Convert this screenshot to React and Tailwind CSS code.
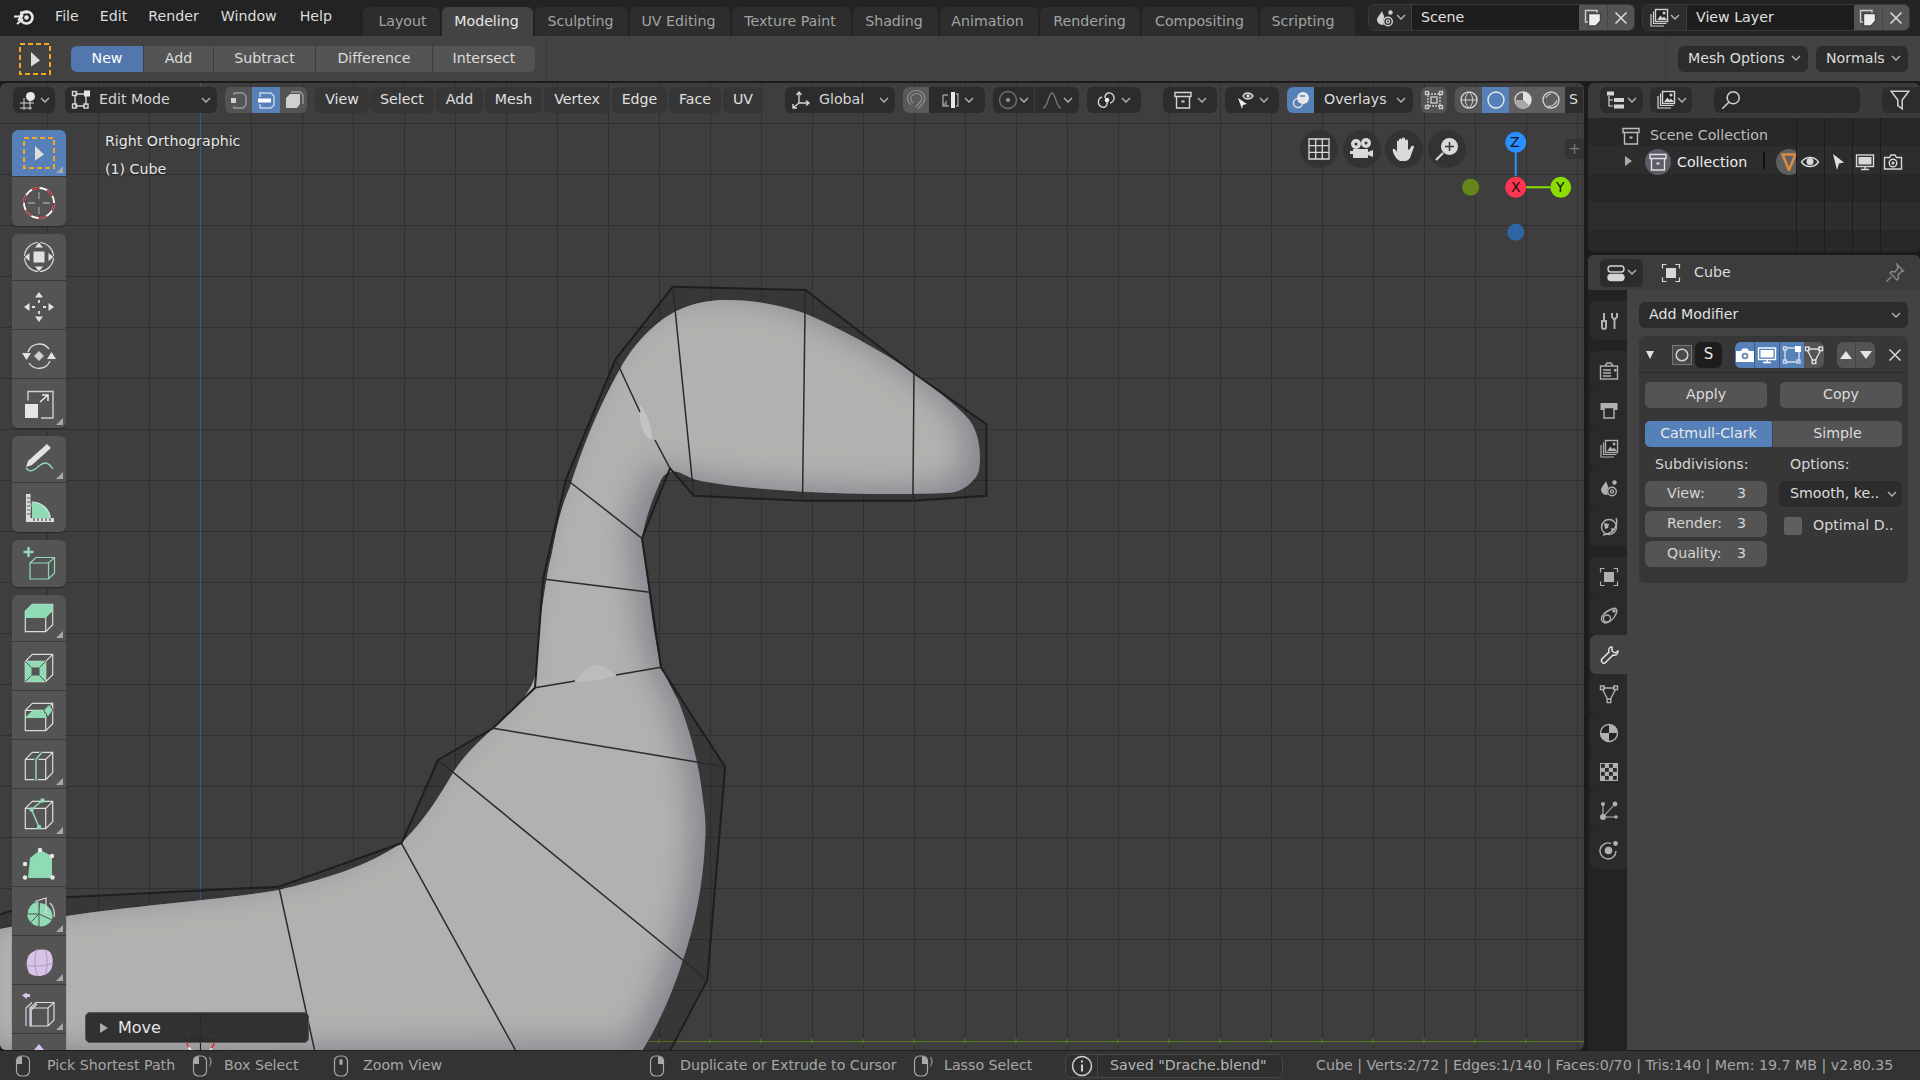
import React from 'react';

const G = ({ s = 20, className = '', children }) => (
  <svg width={s} height={s} viewBox="0 0 20 20" fill="none" stroke="currentColor" strokeWidth="1.4" className={`shrink-0 ${className}`}>
    {children}
  </svg>
);

const Chevron = ({ className = '' }) => (
  <svg width="10" height="7" viewBox="0 0 10 7" fill="none" stroke="#b5b5b5" strokeWidth="1.4" className={`shrink-0 ${className}`}>
    <path d="M1 1l4 4 4-4" />
  </svg>
);

// shared icons
const SceneIcon = () => (
  <G>
    <path d="M7 3 C5 7 2 9 2 12 a5 5 0 0 0 7 4.5 C7 13 9 10 9.500 9.500Z" fill="currentColor" stroke="none" />
    <circle cx="15.500" cy="4.500" r="2.200" fill="currentColor" stroke="none" />
    <circle cx="13" cy="13.500" r="4.300" />
    <circle cx="13" cy="13.500" r="1.600" />
  </G>
);
const LayersIcon = () => (
  <G>
    <path d="M2 6v12h13M4.500 3.500v12h13" strokeWidth="1.200" />
    <rect x="6.500" y="1.500" width="12" height="12" fill="#232323" />
    <path d="M8 12l3.500-4.500 2 2.500 1.500-1.500 3 3.500z" fill="currentColor" stroke="none" />
    <circle cx="15" cy="5" r="1.500" fill="currentColor" stroke="none" />
  </G>
);
const CopyIcon = () => (
  <G>
    <path d="M5 14H2.500V2.500H14V5" />
    <path d="M5.500 5.500H17.500V13L13 18H5.500Z" fill="#eee" stroke="#444" />
  </G>
);
const XIcon = ({ s = 14 }) => (
  <svg width={s} height={s} viewBox="0 0 14 14" stroke="currentColor" strokeWidth="1.500" className="shrink-0"><path d="M1.500 1.500l11 11M12.500 1.500l-11 11" /></svg>
);
const ArchiveIcon = () => (
  <G>
    <path d="M2 2.500h16v4H2zM3.500 6.500V18h13V6.500" />
    <path d="M8.500 11.500h3" strokeWidth="2" />
  </G>
);
const ObjectIcon = () => (
  <G>
    <path d="M1.500 5.500v-4h4M14.500 1.500h4v4M18.500 14.500v4h-4M5.500 18.500h-4v-4" strokeWidth="1.200" />
    <rect x="5" y="5" width="10" height="10" fill="currentColor" stroke="none" />
  </G>
);
const OutlinerIcon = () => (
  <G>
    <path d="M3 6v10h4M3 10h4" strokeWidth="1.200" />
    <path d="M1 1.500h7v4H1zM8 8h10v4H8zM8 14.500h10v4H8z" fill="currentColor" stroke="none" />
  </G>
);
const CameraIcon = () => (
  <G>
    <path d="M1 6h5l1.500-2.500h5L14 6h5v11H1z" fill="currentColor" stroke="none" />
    <circle cx="10" cy="11" r="4" fill="#6c86ab" stroke="#fff" />
    <circle cx="10" cy="11" r="1.500" fill="#fff" stroke="none" />
  </G>
);
const MonitorIcon = () => (
  <G>
    <rect x="1.500" y="3" width="17" height="11.500" />
    <rect x="3.500" y="5" width="13" height="7.500" fill="currentColor" stroke="none" />
    <path d="M6 17.500h8M10 14.500v3" />
  </G>
);
const DataIcon = () => (
  <G strokeWidth="1.200">
    <path d="M4 4h12M3.500 5.500L9 16M16.500 5.500L11 16" />
    <rect x="1.500" y="2" width="3.600" height="3.600" />
    <rect x="14.900" y="2" width="3.600" height="3.600" />
    <rect x="8.200" y="15" width="3.600" height="3.600" />
  </G>
);
const ArrowIcon = () => (
  <G><path d="M5 2l11 8.500-5 1L9 18z" fill="currentColor" stroke="none" /></G>
);

// toolbar icons, on a 36 box
const Cube = ({ c = '#dcdcdc' }) => (
  <path d="M4.300 11.300L11.300 4.300H31.700V24.700L24.700 31.700H4.300ZM4.300 11.300H24.700L31.700 4.300M24.700 11.300V31.700" stroke={c} strokeWidth="1.200" fill="none" />
);
const green = '#8fdcb4';
const purple = '#d9c2e8';
const ToolIcon = ({ children }) => (
  <svg width="36" height="36" viewBox="0 0 36 36" fill="none" className="shrink-0">{children}</svg>
);
const tools = {
  select: (
    <>
      <rect x="3" y="3" width="30" height="30" stroke="#f5a623" strokeWidth="2" strokeDasharray="5 3" />
      <path d="M14 11L23 19.500 14 25.500z" fill="#dedede" />
    </>
  ),
  cursor: (
    <>
      <circle cx="18" cy="18" r="15" stroke="#fff" strokeWidth="1.800" />
      <circle cx="18" cy="18" r="15" stroke="#a53038" strokeWidth="1.800" strokeDasharray="8 7.700" />
      <path d="M18 7v7M18 22v7M7 18h7M22 18h7" stroke="#9a9a9a" strokeWidth="1.300" />
    </>
  ),
  transform: (
    <>
      <circle cx="18" cy="18" r="14.500" stroke="#d8d8d8" strokeWidth="1.200" />
      <rect x="12.500" y="12.500" width="11" height="11" fill="#e2e2e2" />
      <path d="M18 3l-5 6h10zM18 33l-5-6h10zM3 18l6-5v10zM33 18l-6-5v10z" fill="#e2e2e2" stroke="#545454" strokeWidth="1" />
    </>
  ),
  move: (
    <>
      <path d="M18 3l-4 5.500h8zM18 33l-4-5.500h8zM3 18l5.500-4v8zM33 18l-5.500-4v8z" fill="#e2e2e2" />
      <path d="M18 11v3M18 22v3M11 18h3M22 18h3" stroke="#e2e2e2" strokeWidth="1.800" />
    </>
  ),
  rotate: (
    <>
      <path d="M7 14A12 12 0 0 1 28 11M29 23A12 12 0 0 1 8 25" stroke="#dcdcdc" strokeWidth="1.300" />
      <path d="M18 13l5 5-5 5-5-5z" fill="#cfcfcf" />
      <path d="M1 15h9l-4.500 7zM26 21h9l-4.500-7z" fill="#e2e2e2" />
    </>
  ),
  scale: (
    <>
      <rect x="4" y="17" width="13" height="14" fill="#e4e4e4" />
      <path d="M7 13.500V4.500H32V31H20" stroke="#cfcfcf" strokeWidth="1.400" />
      <path d="M19 15l8-7M21 8h6v6" stroke="#eee" strokeWidth="1.500" />
    </>
  ),
  annotate: (
    <>
      <path d="M26 3l4 4L11 24l-6 2 2-6z" fill="#e2e2e2" />
      <path d="M5 27c5 6 9 1 13-2s8-6 14 3" stroke={green} strokeWidth="1.300" />
    </>
  ),
  measure: (
    <>
      <path d="M9 23A17 17 0 0 1 11 11A18 18 0 0 1 30 27H11V11z" fill={green} />
      <path d="M11 11A18 18 0 0 1 29 27" stroke="#dcdcdc" strokeWidth="1.200" />
      <path d="M5 3h4.500v24H33v4H5z" fill="#dcdcdc" />
      <path d="M6 7h3M6 11h3M6 15h3M6 19h3M6 23h3M13 27v3M17 27v3M21 27v3M25 27v3M29 27v3" stroke="#545454" strokeWidth="1.200" />
    </>
  ),
  addCube: (
    <>
      <path d="M7.500 1v10M2.500 6h10" stroke={green} strokeWidth="2.400" />
      <path d="M9 17l6-5.500H33.500V27L27.500 33H9ZM9 17H27.500L33.500 11.500M27.500 17V33" stroke={green} strokeWidth="1.200" />
    </>
  ),
  extrude: (
    <>
      <Cube />
      <path d="M4.300 11.300L11.300 4.300H31.700V11L24.700 18H4.300Z" fill={green} />
    </>
  ),
  inset: (
    <>
      <Cube />
      <path d="M4.300 11.300H24.700V31.700H4.300ZM10.500 17.500V25.500H18.500V17.500Z" fill={green} fillRule="evenodd" />
      <path d="M4.300 11.300L10.500 17.500M24.700 11.300L18.500 17.500M4.300 31.700L10.500 25.500M24.700 31.700L18.500 25.500" stroke="#545454" />
    </>
  ),
  bevel: (
    <>
      <Cube />
      <path d="M4.300 18.500L11.300 11.500H22.700L25.700 19H4.300Z" fill={green} />
      <path d="M22.700 11L28 5.500L32 11L27 18z" fill={green} stroke="#545454" />
    </>
  ),
  loop: (
    <>
      <Cube />
      <path d="M15 11.300V31.700M15 11.300L21 4.300" stroke="#545454" strokeWidth="4" />
      <path d="M15 11.300V31.700M15 11.300L21 4.300" stroke={green} strokeWidth="1.500" />
    </>
  ),
  knife: (
    <>
      <Cube />
      <path d="M21.500 3.500L10.500 12.500L18 30" stroke={green} strokeWidth="1.500" />
      <circle cx="21.500" cy="3.500" r="2.200" fill={green} />
      <circle cx="10.500" cy="12.500" r="2.200" fill={green} />
      <circle cx="18" cy="30" r="2.200" fill={green} />
    </>
  ),
  poly: (
    <>
      <path d="M7 32L9 12 19 4 31 10V32z" fill={green} />
      <g fill="#e8e8e8">
        <circle cx="19" cy="4" r="2.200" /><circle cx="31" cy="10" r="2.200" /><circle cx="4" cy="18" r="2.200" /><circle cx="4" cy="31.500" r="2.200" /><circle cx="31.500" cy="31.500" r="2.200" />
      </g>
    </>
  ),
  spin: (
    <>
      <path d="M18 19L6 19A13.500 13.500 0 0 0 31 25A13.500 13.500 0 0 0 19 8z" fill={green} />
      <path d="M18 19L6 19A13.500 13.500 0 0 1 18 6zM18 19L31 25M18 19V32M18 19L9 28" stroke="#545454" fill={green} />
      <path d="M14 6.500L25 3V19M29 8c4 4 5 10 4 14" stroke="#dcdcdc" strokeWidth="1.200" />
    </>
  ),
  smooth: (
    <>
      <path d="M8 11C13 5 24 4 29 8C33 13 33 25 27 29C20 34 12 32 8 29C5 22 5 16 8 11z" fill={purple} />
      <path d="M5 21C14 23 24 22 32 19M16 5C13 14 13 24 17 32M24 5C27 14 27 24 24 31" stroke="#a99db5" strokeWidth="1" />
    </>
  ),
  slide: (
    <>
      <path d="M9 15L15 9.500H33V27L27 33H9ZM9 15H27L33 9.500M27 15V33" stroke="#dcdcdc" strokeWidth="1.200" />
      <path d="M5 33V15L12 9" stroke="#545454" strokeWidth="3" />
      <path d="M5 33V15L11 9.500M10 33V17L16 11" stroke="#dcdcdc" strokeWidth="1.100" />
      <path d="M10 33V17L16 11" stroke={purple} strokeWidth="1.300" />
      <path d="M1 2.500L6 -1V1H9V4H6V6z" fill={purple} />
    </>
  ),
  shrink: <path d="M18 2l-5 6h10z" fill={purple} />,
};

const Tool = ({ icon, tri, active }) => (
  <div className={`relative flex h-[49px] first:h-[47px] w-full items-center justify-center border-b border-[#393939] pt-[3px] first:pt-0 last:border-b-0 ${active ? 'bg-[#5680b8]' : 'bg-[#545454]'}`}>
    <ToolIcon>{tools[icon]}</ToolIcon>
    {tri && <div className="absolute right-[3px] bottom-[3px] h-0 w-0 border-b-[7px] border-l-[7px] border-b-[#a8a8a8] border-l-transparent" />}
  </div>
);

const ToolGroup = ({ items, className = '' }) => (
  <div className={`overflow-hidden rounded-[6px] shadow-[0_1px_1px_#2a2a2a] ${className}`}>
    {items.map((t) => <Tool key={t.icon} {...t} />)}
  </div>
);

const workspaces = [
  ['Layout', 'w-[77px] pl-[2px]'],
  ['Modeling', 'w-[91px] pr-[2px]'],
  ['Sculpting', 'w-[93px] pr-[2px]'],
  ['UV Editing', 'w-[100px] pr-[3px]'],
  ['Texture Paint', 'w-[119px] pr-[3px]'],
  ['Shading', 'w-[85px] pr-[3px]'],
  ['Animation', 'w-[98px] pr-[3px]'],
  ['Rendering', 'w-[100px] pr-[1px]'],
  ['Compositing', 'w-[116px] pr-[1px]'],
  ['Scripting', 'w-[95px] pr-[9px]'],
];

const SelectorGroup = ({ icon, label, mlClass, iconW, fieldW }) => (
  <div className={`flex h-[27px] overflow-hidden rounded-[6px] border border-[#3a3a3a] ${mlClass}`}>
    <div className={`flex items-center justify-center gap-[1px] bg-[#2c2c2c] text-[#d0d0d0] ${iconW}`}>{icon}<Chevron /></div>
    <div className={`flex items-center border-l border-[#3f3f3f] bg-[#1d1d1d] pl-[9px] text-[#e0e0e0] ${fieldW}`}>{label}</div>
    <div className="flex w-[28px] items-center justify-center bg-[#545454] text-[#ccc]"><CopyIcon /></div>
    <div className="flex w-[27px] items-center justify-center border-l border-[#444] bg-[#545454] text-[#ddd]"><XIcon /></div>
  </div>
);

const TopBar = () => (
  <div className="flex h-[36px] shrink-0 bg-[#232323]">
    <div className="flex w-[363px] shrink-0 items-center gap-[21px] pb-[2px] text-[#dcdcdc]">
      <div className="ml-[13px] -mr-[1px] w-[22px]">
        <svg width="22" height="18" viewBox="0 0 22 18">
          <circle cx="13.500" cy="9.500" r="6" fill="none" stroke="#e8e8e8" strokeWidth="2.600" />
          <circle cx="13.500" cy="9.500" r="2.300" fill="#e8e8e8" />
          <path d="M1 8.500h9M5 12.500L10 7M7 4.500h8M4 16L10 11" stroke="#e8e8e8" strokeWidth="2" />
        </svg>
      </div>
      <span>File</span><span>Edit</span><span>Render</span><span className="ml-[1px]">Window</span><span className="ml-[2px]">Help</span>
    </div>
    <div className="flex items-end gap-[2px] self-stretch">
      {workspaces.map(([name, w]) => (
        <div key={name} className={`flex h-[29px] items-center justify-center rounded-t-[6px] ${w} ${name === 'Modeling' ? 'bg-[#434343] text-[#e6e6e6]' : 'bg-[#2d2d2d] text-[#a3a3a3]'}`}>{name}</div>
      ))}
    </div>
    <div className="flex items-center pb-[1px]">
      <SelectorGroup icon={<SceneIcon />} label="Scene" mlClass="ml-[13px]" iconW="w-[42px]" fieldW="w-[168px]" />
      <SelectorGroup icon={<LayersIcon />} label="View Layer" mlClass="ml-[7px]" iconW="w-[43px]" fieldW="w-[168px]" />
    </div>
  </div>
);

const booleans = [
  ['New', 'w-[72px]'],
  ['Add', 'w-[70px]'],
  ['Subtract', 'w-[102px]'],
  ['Difference', 'w-[117px]'],
  ['Intersect', 'w-[103px]'],
];

const ToolSettings = () => (
  <div className="flex h-[45px] shrink-0 items-center bg-[#434343]">
    <div className="ml-[17px]"><ToolIcon>{tools.select}</ToolIcon></div>
    <div className="ml-[18px] flex h-[26px] overflow-hidden rounded-[6px]">
      {booleans.map(([name, w], i) => (
        <div key={name} className={`flex items-center justify-center ${w} ${i === 0 ? 'bg-[#5177ae] text-white' : 'border-l border-[#3e3e3e] bg-[#545454] text-[#dcdcdc]'}`}>{name}</div>
      ))}
    </div>
    <div className="ml-[11px] h-full w-[1px] bg-[#3b3b3b]" />
    <div className="ml-[1118px] h-full w-[1px] bg-[#3b3b3b]" />
    <div className="ml-[12px] flex h-[26px] w-[130px] items-center justify-between rounded-[6px] bg-[#2c2c2c] px-[10px] text-[#dcdcdc]">Mesh Options<Chevron className="-mr-[3px]" /></div>
    <div className="ml-[8px] flex h-[26px] w-[92px] items-center justify-between rounded-[6px] bg-[#2c2c2c] px-[10px] text-[#dcdcdc]">Normals<Chevron className="-mr-[3px]" /></div>
  </div>
);

const Box = ({ className = '', children }) => (
  <div className={`flex h-[26px] shrink-0 items-center rounded-[6px] bg-[#2c2c2c] text-[#d5d5d5] ${className}`}>{children}</div>
);
const Menu = ({ label, className }) => (
  <div className={`flex h-[26px] shrink-0 items-center justify-center rounded-[6px] bg-[#363636] text-[#e0e0e0] ${className}`}>{label}</div>
);

const SelectMode = () => (
  <div className="ml-[8px] flex h-[26px] w-[82px] overflow-hidden rounded-[6px] bg-[#545454]">
    <div className="flex w-[27px] items-center justify-center text-[#9a9a9a]">
      <G><path d="M5 5V3h9l3 3v9l-3 3H5v-2" /><rect x="2" y="8" width="5" height="5" fill="#d0d0d0" stroke="none" /></G>
    </div>
    <div className="flex w-[28px] items-center justify-center bg-[#5680b8] text-[#c9d5e6]">
      <G><path d="M4 7V3h11l3 3v9l-3 3H4v-4" /><rect x="2" y="8.500" width="13" height="4" fill="#fff" stroke="none" /></G>
    </div>
    <div className="flex w-[27px] items-center justify-center text-[#9a9a9a]">
      <G><path d="M7 2h9l3 3v9" /><path d="M6 4h10v10l-3 4H2V8z" fill="#d0d0d0" stroke="none" /></G>
    </div>
  </div>
);

const Sphere = ({ kind }) => (
  <G>
    <circle cx="10" cy="10" r="8" />
    {kind === 'wire' && <path d="M2 10h16M10 2c-5 5-5 11 0 16M10 2c5 5 5 11 0 16" strokeWidth="1" />}
    {kind === 'mat' && <path d="M10 2a8 8 0 0 1 6 13.500L10 10z" fill="#e0e0e0" stroke="none" />}
    {kind === 'mat' && <path d="M2 10h8L16 15.500A8 8 0 0 1 2 10z" fill="#a8a8a8" stroke="none" />}
    {kind === 'render' && <path d="M5 8a6 6 0 0 1 5-4M7 16c4 1 8-2 9-6" strokeWidth="1.100" />}
  </G>
);

const ViewHeader = () => (
  <div className="flex h-[30px] shrink-0 items-start pt-[4px] pl-[13px]">
    <Box className="w-[42px] justify-center gap-[1px]">
      <G><path d="M1 13h14M1 18h12M5 8v12M11 8v12" strokeWidth="1" /><circle cx="11.500" cy="6.500" r="4.500" fill="#e8e8e8" stroke="none" /></G>
      <Chevron />
    </Box>
    <Box className="ml-[10px] w-[152px] justify-between px-[6px]">
      <span className="flex items-center gap-[8px]">
        <G strokeWidth="1"><path d="M4 4h10M4 16h10M4 5v10M15 5v10" /><rect x="1.500" y="1.500" width="4" height="4" /><rect x="1.500" y="14" width="4" height="4" /><rect x="13" y="14" width="4" height="4" /><rect x="13" y="0.500" width="6" height="6" fill="#e8e8e8" stroke="none" /></G>
        Edit Mode
      </span>
      <Chevron />
    </Box>
    <SelectMode />
    <Menu label="View" className="ml-[8px] w-[54px]" />
    <Menu label="Select" className="ml-[1px] w-[64px]" />
    <Menu label="Add" className="ml-[2px] w-[47px]" />
    <Menu label="Mesh" className="ml-[2px] w-[57px]" />
    <Menu label="Vertex" className="ml-[2px] w-[66px]" />
    <Menu label="Edge" className="ml-[2px] w-[55px]" />
    <Menu label="Face" className="ml-[2px] w-[52px]" />
    <Menu label="UV" className="ml-[2px] w-[40px]" />
    <Box className="ml-[22px] w-[110px] justify-between px-[6px]">
      <span className="flex items-center gap-[8px]">
        <G strokeWidth="1.200"><path d="M8 2v11L2 18M8 13h10M5.500 5L8 2l2.500 3M15 10.500l3 2.500-3 2.500M2 14v4h4" /></G>
        Global
      </span>
      <Chevron />
    </Box>
    <div className="ml-[8px] flex h-[26px] w-[82px] overflow-hidden rounded-[6px] bg-[#2c2c2c]">
      <div className="flex w-[26px] items-center justify-center bg-[#5a5a5a]">
        <svg width="20" height="22" viewBox="0 0 20 22" fill="none">
          <path d="M6 15L4 12.500C1.500 8 5 3 10.500 3C16 3 19 8.500 16 13L11 18.500" stroke="#8e8e8e" strokeWidth="4.200" />
          <path d="M6 15L4 12.500C1.500 8 5 3 10.500 3C16 3 19 8.500 16 13L11 18.500" stroke="#5a5a5a" strokeWidth="1.800" />
        </svg>
      </div>
      <div className="flex flex-1 items-center justify-center gap-[4px] text-[#999]">
        <G strokeWidth="1.100"><path d="M3 5h5M3 5v11h6M4 13v3M6 11v5M16 4h2v12h-2" /><rect x="11" y="2" width="4" height="16" fill="#e8e8e8" stroke="none" /></G>
        <Chevron />
      </div>
    </div>
    <div className="ml-[8px] flex h-[26px] w-[86px] overflow-hidden rounded-[6px] bg-[#2c2c2c]">
      <div className="flex w-[42px] items-center justify-center gap-[1px] border-r border-[#3e3e3e] text-[#6f6f6f]">
        <G><circle cx="10" cy="10" r="8.500" /><circle cx="10" cy="10" r="2" fill="#9a9a9a" stroke="none" /></G><Chevron />
      </div>
      <div className="flex flex-1 items-center justify-center gap-[1px] text-[#777]">
        <G><path d="M1 18c5 0 5-14 9-15 4 1 4 15 9 15" /></G><Chevron />
      </div>
    </div>
    <Box className="ml-[8px] w-[54px] justify-center gap-[4px]">
      <G><path d="M8 8a5 5 0 0 1 3-5 5 5 0 1 1 2 10M10 12a5 5 0 0 1-2 5 5 5 0 1 1-3-10" /><circle cx="10" cy="10" r="2.300" fill="#eee" stroke="none" /></G>
      <Chevron />
    </Box>
    <Box className="ml-[22px] w-[54px] justify-center gap-[4px]"><ArchiveIcon /><Chevron /></Box>
    <Box className="ml-[8px] w-[54px] justify-center gap-[4px]">
      <G><path d="M8 6c2-4 7-4 10 0-3 4-8 4-10 0z" /><circle cx="13" cy="6" r="1.800" fill="currentColor" stroke="none" /><path d="M3 8l9 6-4 1-1 4z" fill="#eee" stroke="none" /></G>
      <Chevron />
    </Box>
    <div className="ml-[8px] flex h-[26px] w-[126px] overflow-hidden rounded-[6px] bg-[#2c2c2c]">
      <div className="flex w-[27px] items-center justify-center bg-[#5680b8] text-[#e0e0e0]">
        <G><circle cx="7" cy="13" r="4.500" /><circle cx="12" cy="8" r="6" fill="#e8e8e8" stroke="none" /><path d="M9 6h5" stroke="#5680b8" /></G>
      </div>
      <div className="flex flex-1 items-center justify-between pr-[7px] pl-[10px] text-[#dcdcdc]">Overlays<Chevron /></div>
    </div>
    <div className="ml-[8px] flex h-[26px] w-[26px] shrink-0 items-center justify-center rounded-[6px] bg-[#545454] text-[#c8c8c8]">
      <G strokeWidth="1"><path d="M4 4h12v12H4z" strokeDasharray="2 1" /><rect x="1.500" y="1.500" width="3" height="3" /><rect x="15.500" y="1.500" width="3" height="3" /><rect x="1.500" y="15.500" width="3" height="3" /><rect x="15.500" y="15.500" width="3" height="3" /><rect x="7" y="7" width="6" height="6" /></G>
    </div>
    <div className="ml-[8px] flex h-[26px] w-[110px] overflow-hidden rounded-l-[6px] bg-[#545454] text-[#cfcfcf]">
      <div className="flex w-[27px] items-center justify-center"><Sphere kind="wire" /></div>
      <div className="flex w-[27px] items-center justify-center bg-[#5680b8] text-[#e4e8ef]"><Sphere kind="solid" /></div>
      <div className="flex w-[28px] items-center justify-center bg-[#5f5f5f]"><Sphere kind="mat" /></div>
      <div className="flex w-[28px] items-center justify-center bg-[#5f5f5f]"><Sphere kind="render" /></div>
    </div>
    <div className="flex h-[26px] w-[18px] shrink-0 items-center bg-[#2c2c2c] pl-[4px] text-[#dcdcdc]">S</div>
  </div>
);

const Round = ({ className = '', children }) => (
  <div className={`absolute top-[47px] flex h-[38px] w-[38px] items-center justify-center rounded-full bg-[#333333] text-[#dadada] ${className}`}>{children}</div>
);

const Gizmo = () => (
  <>
    <Round className="left-[1300px]">
      <svg width="22" height="22" viewBox="0 0 22 22" fill="none" stroke="currentColor" strokeWidth="1.300"><path d="M1 1h20v20H1zM1 7.700h20M1 14.300h20M7.700 1v20M14.300 1v20" /></svg>
    </Round>
    <Round className="left-[1343px]">
      <svg width="24" height="22" viewBox="0 0 24 22" fill="currentColor"><circle cx="6" cy="6" r="5" /><circle cx="16" cy="5" r="5" /><path d="M3 11h15v9H3zM18 14l5-2v7l-5-2zM0 13h3v3H0z" /><circle cx="6" cy="6" r="1.500" fill="#333" /><circle cx="16" cy="5" r="1.500" fill="#333" /></svg>
    </Round>
    <Round className="left-[1385px]">
      <svg width="24" height="24" viewBox="0 0 24 24" fill="currentColor"><path d="M5 22C2 18 0 14 1 12c1-1 3 1 4 3V5c0-2 2-2 2 0v6-8c0-2 3-2 3 0v8-9c0-2 3-2 3 0v9-7c0-2 3-2 3 0v8l1 1 2-3c1-2 3-1 3 0l-3 8c-1 4-3 6-7 6H8z" /></svg>
    </Round>
    <Round className="left-[1428px]">
      <svg width="24" height="24" viewBox="0 0 24 24"><circle cx="14.500" cy="9.500" r="8.500" fill="#dadada" /><path d="M8 16l-7 7" stroke="#dadada" strokeWidth="2.200" /><path d="M14.500 5v9M10 9.500h9" stroke="#333" strokeWidth="1.500" /></svg>
    </Round>
    <div className="absolute top-[56px] left-[1565px] flex h-[20px] w-[19px] items-center justify-center rounded-l-[4px] bg-[#333333] text-[15px] text-[#777]">+</div>
    <svg width="130" height="120" viewBox="1460 130 130 120" className="absolute top-[47px] left-[1460px]">
      <path d="M1515.700 148V176" stroke="#2890ff" strokeWidth="2" />
      <path d="M1526 187.300H1550" stroke="#8bdc00" strokeWidth="2" />
      <circle cx="1515.700" cy="142.300" r="10.500" fill="#2890ff" />
      <circle cx="1515.700" cy="187.300" r="10.500" fill="#ff3352" />
      <circle cx="1560.700" cy="187.300" r="10.500" fill="#8bdc00" />
      <circle cx="1470.700" cy="187.300" r="8.500" fill="#65871a" />
      <circle cx="1515.700" cy="232.300" r="8.500" fill="#2e65a5" />
    </svg>
    <span className="absolute top-[49px] left-[1510px] text-[14px] text-[#111]">Z</span>
    <span className="absolute top-[94px] left-[1511px] text-[14px] text-[#111]">X</span>
    <span className="absolute top-[94px] left-[1556px] text-[14px] text-[#111]">Y</span>
  </>
);

const surface = 'M-5 930L66.700 916C140 905 220 900 278.800 890C320 880 365 868 401.500 843C425 820 440 795 452.900 773C470 745 500 725 522 700C530 690 535 680 536.400 670C538 640 540 620 544.300 593C548 570 549 565 552 553C558 520 562 505 570 486.700C585 440 600 405 619.500 370C630 350 650 325 674.800 311.700C695 302 710 300 728 300C755 300 780 305 803.300 312.700C840 328 880 350 914 373C935 390 955 403 969.400 420C977 430 980 445 980 456.700C980 470 978 476 973.400 480C965 490 955 493 945.700 493C900 495 850 494 803 491.700C760 489 725 486 696.600 480C685 476 678 470 672.800 471.700C665 472 662 478 661 480C652 500 645 520 642 538C644 560 647 575 649 593C652 620 656 645 661 667C668 680 672 690 678 700C692 735 700 770 703 800C706 820 706 830 705 843C703 885 695 925 683 960C672 995 658 1025 642.600 1050L-5 1055Z';
const cageOutline = '-5,916 30,905 66.700,897.300 278.800,886.700 401.500,843.300 438,760 493,728.300 535,687.700 543,579 566,479 615.500,359.300 672.800,286.700 805.300,290 914,373.300 986.400,424.300 986.400,495.700 912.900,500.700 802.500,500.700 693.800,495.700 670,468.300 642,538.300 650,592.300 661,667.300 694.600,720 725.200,766.700 707.300,980 665,1060 -5,1060';
const innerEdges = [
  [278.8, 886.7, 314.5, 1050], [401.5, 843.3, 515.4, 1050], [438, 760, 707.3, 980], [493, 728.3, 725.2, 766.7],
  [535, 687.7, 575, 681], [616, 675, 661, 667.3], [543, 579, 650, 592.3], [566, 479, 642, 538.3],
  [615.5, 359.3, 640, 412], [655, 440, 670, 468.3], [672.8, 286.7, 693.8, 495.7], [805.3, 290, 802.5, 500.7], [914, 373.3, 912.9, 500.7],
];

const verticals = Array.from({ length: 31 }, (_, i) => 200.5 + 51 * (i - 3));
const horizontals = Array.from({ length: 20 }, (_, i) => 72.5 + 51 * i);
const axisTicks = Array.from({ length: 18 }, (_, i) => 659 + 51 * i);

const Canvas = () => (
  <svg width="1584" height="967" viewBox="0 83 1584 967" className="absolute top-0 left-0">
    <defs>
      <clipPath id="surf"><path d={surface} /></clipPath>
      <filter id="soft" x="-10%" y="-10%" width="120%" height="120%"><feGaussianBlur stdDeviation="15" /></filter>
    </defs>
    {verticals.map((x) => <path key={x} d={`M${x} 83V1050`} stroke="#303030" strokeWidth="1" />)}
    {horizontals.map((y) => <path key={y} d={`M0 ${y}H1584`} stroke="#303030" strokeWidth="1" />)}
    <path d="M200.500 83V1050" stroke="#2d5f96" strokeWidth="1" />
    <path d="M0 1041.500H1584" stroke="#5c7a1e" strokeWidth="1" />
    {axisTicks.map((x) => <path key={x} d={`M${x} 1038.500v5.500`} stroke="#5c7a1e" strokeWidth="1.200" />)}
    <polygon points={cageOutline} fill="#000" fillOpacity="0.1" />
    <path d={surface} fill="#85858f" />
    <g clipPath="url(#surf)">
      <path d={surface} fill="#b1b1af" filter="url(#soft)" transform="translate(-14 -6)" />
      <path d="M640 405C646 412 652 425 652 440C645 438 638 425 640 405z" fill="#c3c3c3" />
      <path d="M575 682C582 670 592 664 600 665C608 668 612 672 616 675C602 680 590 682 575 682z" fill="#bcbcbc" />
    </g>
    <polygon points={cageOutline} fill="none" stroke="#1e1e1e" strokeWidth="2" />
    {innerEdges.map(([a, b, c, d]) => <path key={`${a}-${b}`} d={`M${a} ${b}L${c} ${d}`} stroke="#2a2a2a" strokeWidth="1.500" />)}
    <circle cx="200.500" cy="1040" r="14" fill="none" stroke="#fff" strokeWidth="1.500" />
    <circle cx="200.500" cy="1040" r="14" fill="none" stroke="#e01818" strokeWidth="1.500" strokeDasharray="9 9" />
    <path d="M172 1040h56M200.500 1012v50" stroke="#222" strokeWidth="1.200" />
    <circle cx="200.500" cy="1040" r="2.500" fill="#333" />
  </svg>
);

const Viewport = () => (
  <div className="relative mt-[2px] h-[967px] w-[1584px] shrink-0 overflow-hidden rounded-[6px] bg-[#3e3e3e]">
    <Canvas />
    <div className="relative">
      <ViewHeader />
      <div className="flex pl-[12px]">
        <div className="mt-[17px] flex w-[54px] flex-col gap-[8px]">
          <ToolGroup items={[{ icon: 'select', tri: true, active: true }, { icon: 'cursor' }]} />
          <ToolGroup items={[{ icon: 'transform' }, { icon: 'move' }, { icon: 'rotate' }, { icon: 'scale', tri: true }]} />
          <ToolGroup items={[{ icon: 'annotate', tri: true }, { icon: 'measure' }]} />
          <ToolGroup items={[{ icon: 'addCube' }]} />
          <ToolGroup items={[{ icon: 'extrude', tri: true }, { icon: 'inset' }, { icon: 'bevel' }, { icon: 'loop', tri: true }, { icon: 'knife', tri: true }, { icon: 'poly' }, { icon: 'spin', tri: true }, { icon: 'smooth', tri: true }, { icon: 'slide', tri: true }, { icon: 'shrink' }]} />
        </div>
        <div className="mt-[14px] ml-[39px] leading-[28px] text-[#e8e8e8] [text-shadow:0_1px_1px_#222]">
          <div>Right Orthographic</div>
          <div>(1) Cube</div>
        </div>
      </div>
    </div>
    <Gizmo />
    <div className="absolute top-[929px] left-[85px] flex h-[31px] w-[224px] items-center rounded-[5px] border border-[#555] bg-[#2a2a2a]/95 pl-[14px] text-[16px] text-[#e6e6e6]">
      <span className="h-0 w-0 border-y-[5px] border-l-[8px] border-y-transparent border-l-[#aaa]" />
      <span className="ml-[10px]">Move</span>
    </div>
  </div>
);

const rows = ['bg-[#282828]', 'bg-[#2d2d2d]', 'bg-[#282828]', 'bg-[#2d2d2d]', 'bg-[#282828]'];

const Outliner = () => (
  <div className="relative mt-[2px] h-[169px] shrink-0 overflow-hidden rounded-[6px] bg-[#282828]">
    <div className="flex h-[35px] items-start bg-[#3a3a3a] pt-[4px] pl-[12px]">
      <Box className="w-[43px] justify-center gap-[1px]"><OutlinerIcon /><Chevron /></Box>
      <Box className="ml-[7px] w-[42px] justify-center gap-[1px]"><LayersIcon /><Chevron /></Box>
      <div className="ml-[22px] flex h-[26px] w-[157px] items-center rounded-[6px] bg-[#2a2a2a] pl-[6px] text-[#d0d0d0]">
        <G s={22}><circle cx="12" cy="8" r="5.500" /><path d="M8 12l-6 6" /></G>
      </div>
      <div className="ml-[22px] flex h-[26px] w-[40px] items-center rounded-l-[6px] bg-[#2c2c2c] pl-[7px] text-[#d0d0d0]">
        <G s={22}><path d="M2 2h16l-6 8v8l-4-3v-5z" /></G>
      </div>
    </div>
    {rows.map((c, i) => <div key={i} className={`h-[28px] ${c}`} />)}
    <div className="absolute top-[35px] left-[208px] h-[134px] w-[1px] bg-[#1c1c1c]" />
    <div className="absolute top-[35px] left-[236px] h-[134px] w-[1px] bg-[#1c1c1c]" />
    <div className="absolute top-[35px] left-[264px] h-[134px] w-[1px] bg-[#1c1c1c]" />
    <div className="absolute top-[35px] left-[292px] h-[134px] w-[1px] bg-[#1c1c1c]" />
    <div className="absolute top-[42px] left-[33px] flex items-center gap-[9px] text-[#bdbdbd]"><ArchiveIcon />Scene Collection</div>
    <div className="absolute top-[67px] left-[37px] mt-[6px] h-0 w-0 border-y-[5px] border-l-[7px] border-y-transparent border-l-[#aaa]" />
    <div className="absolute top-[66px] left-[57px] flex h-[26px] w-[26px] items-center justify-center rounded-full bg-[#5d5d6a] text-[#e0e0e0]"><ArchiveIcon /></div>
    <div className="absolute top-[69px] left-[89px] text-[#ececec]">Collection</div>
    <div className="absolute top-[69px] left-[175px] h-[17px] w-[2px] bg-[#111]" />
    <div className="absolute top-[66px] left-[188px] h-[26px] w-[20px] overflow-hidden">
      <div className="flex h-[26px] w-[26px] items-center justify-center rounded-full bg-[#5f5f5f]">
        <svg width="16" height="18" viewBox="0 0 16 18"><path d="M1.500 1.500h13L8 17z" fill="none" stroke="#d98a45" strokeWidth="2.600" /></svg>
      </div>
    </div>
    <div className="absolute top-[69px] left-[212px] text-[#d8d8d8]"><G><path d="M1.500 10c4-6 13-6 17 0-4 6-13 6-17 0z" /><circle cx="10" cy="9.500" r="3.500" fill="currentColor" stroke="none" /></G></div>
    <div className="absolute top-[69px] left-[240px] text-[#e0e0e0]"><ArrowIcon /></div>
    <div className="absolute top-[69px] left-[267px] text-[#d8d8d8]"><MonitorIcon /></div>
    <div className="absolute top-[69px] left-[295px] text-[#d8d8d8]">
      <G><path d="M1.500 5.500h5L8 3h4l1.500 2.500h5V17h-17z" /><circle cx="10" cy="11" r="3.800" /><circle cx="10" cy="11" r="1.500" fill="currentColor" stroke="none" /></G>
    </div>
  </div>
);

const tabIcons = {
  tool: <G><path d="M5 2v8M3 10h4v6a2 2 0 0 1-4 0zM13 2v4l2.500 3L18 6V2M15.500 9v9" strokeWidth="2" /></G>,
  render: <G><path d="M6 5l2-3h4l2 3" /><rect x="1.500" y="5" width="17" height="13" /><path d="M4 9h8M4 12h8M4 15h8" /><rect x="15" y="8" width="2.500" height="2.500" fill="currentColor" stroke="none" /></G>,
  output: <G><path d="M1.500 3h17v7h-17z" fill="currentColor" stroke="none" /><path d="M5 7.500h10V18H5z" fill="#2a2a2a" /></G>,
  layer: <LayersIcon />,
  scene: <SceneIcon />,
  world: <G><circle cx="10" cy="10" r="7.500" /><path d="M5 6l5 1-1 4-3 1zM12 11l4 1-3 4z" fill="currentColor" stroke="none" /><path d="M17 1c3 7-3 16-13 17" /></G>,
  object: <ObjectIcon />,
  constraint: <G strokeWidth="1.500"><path d="M3 15C1 11 5 6 13 3c4-2 6 1 4 5s-6 9-11 9c-1 0-2-1-3-2z" /><circle cx="8" cy="12.500" r="3.500" /><circle cx="15" cy="5" r="1" fill="currentColor" /></G>,
  modifier: <G strokeWidth="1.500"><path d="M13 2c-3 0-4 3-3 5l-7 7c-2 3 2 6 4 3l7-7c3 1 5-1 5-4l-3 2-3-2z" /></G>,
  data: <DataIcon />,
  material: <G><circle cx="10" cy="10" r="8.500" fill="#222" /><path d="M10 1.500a8.500 8.500 0 0 1 8.500 8.500H10zM1.500 10H10V18.500A8.500 8.500 0 0 1 1.500 10z" fill="currentColor" stroke="none" /></G>,
  texture: (
    <G>
      <rect x="1" y="1" width="18" height="18" fill="currentColor" stroke="none" />
      {[[1, 1], [9, 1], [5, 5], [13, 5], [1, 9], [9, 9], [5, 13], [13, 13]].map(([x, y]) => <rect key={`${x}${y}`} x={x + 1} y={y + 1} width="3.800" height="3.800" fill="#2a2a2a" stroke="none" />)}
    </G>
  ),
  particles: <G><path d="M4 16V3M4 16L16 3M4 16h13" strokeWidth="1.100" /><circle cx="4" cy="16" r="3" fill="currentColor" stroke="none" /><circle cx="4" cy="3" r="2" fill="currentColor" stroke="none" /><circle cx="16" cy="3" r="2.400" fill="currentColor" stroke="none" /><circle cx="17" cy="16" r="1.800" fill="currentColor" stroke="none" /></G>,
  physics: <G><path d="M12 3.500A8 8 0 1 0 17 11" /><circle cx="9.500" cy="10.500" r="3.800" fill="currentColor" stroke="none" /><circle cx="16.500" cy="3.500" r="2.400" fill="currentColor" stroke="none" /></G>,
};

const TabGroup = ({ names, className = '', active }) => (
  <div className={`flex flex-col ${className}`}>
    {names.map((n) => (
      <div key={n} className={`ml-[2px] flex h-[39px] items-center justify-center rounded-l-[6px] ${active === n ? 'bg-[#434343] text-[#e8e8e8]' : 'bg-[#2a2a2a] text-[#b0b0b0]'}`}>{tabIcons[n]}</div>
    ))}
  </div>
);

const Btn = ({ className = '', children }) => (
  <div className={`flex h-[26px] items-center justify-center rounded-[5px] bg-[#545454] text-[#dcdcdc] ${className}`}>{children}</div>
);

const Field = ({ label, value }) => (
  <div className="flex h-[26px] w-[122px] items-center rounded-[6px] bg-[#545454] text-[#d5d5d5]">
    <span className="ml-[22px] w-[70px]">{label}</span><span>{value}</span>
  </div>
);

const Modifier = () => (
  <div className="mt-[8px] ml-[12px] h-[247px] w-[269px] rounded-[6px] bg-[#373737]">
    <div className="flex h-[37px] items-center border-b border-[#2c2c2c] pt-[1px]">
      <span className="ml-[7px] h-0 w-0 border-x-[4.500px] border-t-[8px] border-x-transparent border-t-[#e0e0e0]" />
      <div className="ml-[18px] flex h-[20px] w-[20px] items-center justify-center border border-[#777] bg-[#4a4a4a] text-[#d0d0d0]">
        <svg width="14" height="14" viewBox="0 0 14 14" fill="none" stroke="currentColor" strokeWidth="1.500"><circle cx="7" cy="7" r="5.800" /></svg>
      </div>
      <div className="ml-[3px] flex h-[26px] w-[27px] items-center justify-center rounded-[6px] bg-[#1d1d1d] text-[15px] text-[#e8e8e8]">S</div>
      <div className="ml-[13px] flex h-[26px] w-[89px] overflow-hidden rounded-[6px] bg-[#545454] text-white">
        <div className="flex w-[19px] items-center justify-center bg-[#5680b8]"><CameraIcon /></div>
        <div className="flex w-[25px] items-center justify-center border-l border-[#3f5c85] bg-[#5680b8]"><MonitorIcon /></div>
        <div className="flex w-[25px] items-center justify-center border-l border-[#3f5c85] bg-[#5680b8] text-[#cfdbee]">
          <G strokeWidth="1"><path d="M3 4v12M17 7v9M4 17h12M4 3h9" /><rect x="1.500" y="15" width="3" height="3" /><rect x="15" y="15" width="3" height="3" /><rect x="1.500" y="2" width="3" height="3" /><rect x="13" y="1" width="6" height="6" fill="#fff" stroke="none" /></G>
        </div>
        <div className="flex w-[20px] items-center justify-center text-[#ddd]"><DataIcon /></div>
      </div>
      <div className="ml-[13px] flex h-[26px] w-[38px] overflow-hidden rounded-[6px] bg-[#545454]">
        <div className="flex w-[19px] items-center justify-center border-r border-[#444]"><span className="h-0 w-0 border-x-[6px] border-b-[8px] border-x-transparent border-b-[#e6e6e6]" /></div>
        <div className="flex w-[19px] items-center justify-center"><span className="h-0 w-0 border-x-[6px] border-t-[8px] border-x-transparent border-t-[#e6e6e6]" /></div>
      </div>
      <div className="ml-[13px] text-[#d8d8d8]"><XIcon /></div>
    </div>
    <div className="mx-[6px] mt-[9px] flex justify-between">
      <Btn className="w-[122px]">Apply</Btn>
      <Btn className="w-[122px]">Copy</Btn>
    </div>
    <div className="mx-[6px] mt-[13px] flex h-[26px] overflow-hidden rounded-[5px]">
      <div className="flex w-[127px] items-center justify-center bg-[#5680b8] text-[#e8e8e8]">Catmull-Clark</div>
      <div className="flex flex-1 items-center justify-center border-l border-[#444] bg-[#545454] text-[#dcdcdc]">Simple</div>
    </div>
    <div className="mx-[6px] mt-[4px] flex">
      <div className="w-[134px]">
        <div className="flex h-[30px] items-center pb-[2px] pl-[10px] text-[#d5d5d5]">Subdivisions:</div>
        <div className="flex flex-col gap-[4px]">
          <Field label="View:" value="3" />
          <Field label="Render:" value="3" />
          <Field label="Quality:" value="3" />
        </div>
      </div>
      <div className="w-[123px]">
        <div className="flex h-[30px] items-center pb-[2px] pl-[11px] text-[#d5d5d5]">Options:</div>
        <div className="flex h-[26px] items-center justify-between rounded-[6px] bg-[#2c2c2c] pr-[10px] pl-[11px] text-[#dcdcdc]">Smooth, ke..<Chevron className="-mr-[5px]" /></div>
        <div className="mt-[8px] flex items-center pl-[5px] text-[#d5d5d5]">
          <span className="h-[18px] w-[18px] rounded-[3px] bg-[#5f5f5f]" />
          <span className="ml-[11px]">Optimal D..</span>
        </div>
      </div>
    </div>
  </div>
);

const Properties = () => (
  <div className="mt-[3px] flex h-[795px] shrink-0 flex-col overflow-hidden rounded-t-[6px] bg-[#434343]">
    <div className="flex h-[35px] shrink-0 items-center bg-[#3c3c3c] pl-[12px] text-[#dcdcdc]">
      <Box className="h-[28px] w-[43px] justify-center gap-[1px]">
        <G><rect x="2" y="3" width="16" height="6" rx="3" /><rect x="2" y="11.500" width="16" height="6" rx="3" fill="currentColor" /></G>
        <Chevron />
      </Box>
      <div className="ml-[18px] text-[#d8d8d8]"><ObjectIcon /></div>
      <span className="ml-[13px]">Cube</span>
      <div className="mr-[15px] ml-auto text-[#8a8a8a]">
        <G><path d="M12 1.500l6.500 6.500-2 .5-3.500 3.500.5 3.500-1.500 1.500-7-7 1.500-1.500 3.500.5L13 5z" /><path d="M6 14l-4.500 4.500" /></G>
      </div>
    </div>
    <div className="flex flex-1">
      <div className="w-[39px] shrink-0 bg-[#232323] pt-[11px]">
        <TabGroup names={['tool']} />
        <TabGroup names={['render', 'output', 'layer', 'scene', 'world']} className="mt-[11px]" />
        <TabGroup names={['object', 'constraint', 'modifier', 'data', 'material', 'texture', 'particles', 'physics']} className="mt-[11px]" active="modifier" />
      </div>
      <div className="flex-1">
        <div className="mt-[12px] ml-[12px] flex h-[26px] w-[269px] items-center justify-between rounded-[6px] bg-[#2c2c2c] px-[10px] text-[#e0e0e0]">Add Modifier<Chevron className="-mr-[3px]" /></div>
        <Modifier />
      </div>
    </div>
  </div>
);

const Mouse = ({ side }) => (
  <svg width="18" height="22" viewBox="0 0 18 22" fill="none" stroke="#a8a8a8" strokeWidth="1.200" className="shrink-0">
    <rect x="2.500" y="1" width="13" height="20" rx="5" />
    {side === 'left' && <path d="M3 9V5a4 4 0 0 1 5-3.500V9z" fill="#a8a8a8" stroke="none" />}
    {side === 'right' && <path d="M15 9V5a4 4 0 0 0-5-3.500V9z" fill="#a8a8a8" stroke="none" />}
    {side === 'mid' && <rect x="7.500" y="4" width="3" height="6" rx="1.500" fill="#a8a8a8" stroke="none" />}
  </svg>
);

const StatusBar = () => (
  <div className="flex h-[30px] shrink-0 items-center border-t border-[#1f1f1f] bg-[#333333] text-[#a6a6a6]">
    <div className="ml-[14px]"><Mouse side="left" /></div>
    <span className="ml-[15px] w-[127px] shrink-0 pt-[1px] whitespace-nowrap">Pick Shortest Path</span>
    <div className="ml-[17px] flex w-[22px]"><Mouse side="left" /><span className="-ml-[1px] text-[11px] leading-[14px]">)</span></div>
    <span className="ml-[11px] w-[77px] shrink-0 pt-[1px] whitespace-nowrap">Box Select</span>
    <div className="ml-[31px]"><Mouse side="mid" /></div>
    <span className="ml-[13px] w-[81px] shrink-0 pt-[1px] whitespace-nowrap">Zoom View</span>
    <div className="ml-[204px]"><Mouse side="right" /></div>
    <span className="ml-[14px] w-[215px] shrink-0 pt-[1px] whitespace-nowrap">Duplicate or Extrude to Cursor</span>
    <div className="ml-[17px] flex w-[21px]"><Mouse side="right" /><span className="-ml-[1px] text-[11px] leading-[14px]">)</span></div>
    <span className="ml-[11px] w-[88px] shrink-0 pt-[1px] whitespace-nowrap">Lasso Select</span>
    <div className="ml-[33px] flex h-[24px] w-[218px] shrink-0 items-center rounded-[6px] border border-[#474747] bg-[#2f2f2f]">
      <div className="flex h-full w-[32px] items-center justify-center border-r border-[#474747] text-[#d0d0d0]">
        <svg width="22" height="22" viewBox="0 0 22 22" fill="none" stroke="currentColor" strokeWidth="1.500"><circle cx="11" cy="11" r="9.500" /><path d="M11 9.500v7M11 5.500v2" strokeWidth="2" /></svg>
      </div>
      <span className="ml-[12px] pt-[1px] whitespace-nowrap text-[#b5b5b5]">Saved "Drache.blend"</span>
    </div>
    <span className="ml-[33px] pt-[1px] whitespace-nowrap">Cube | Verts:2/72 | Edges:1/140 | Faces:0/70 | Tris:140 | Mem: 19.7 MB | v2.80.35</span>
  </div>
);

export default function App() {
  return (
    <div className="flex h-[1080px] w-[1920px] flex-col overflow-hidden bg-[#1c1c1c] text-[14.2px] [font-family:'DejaVu_Sans',sans-serif]">
      <TopBar />
      <ToolSettings />
      <div className="flex h-[969px] shrink-0">
        <Viewport />
        <div className="ml-[4px] flex w-[332px] shrink-0 flex-col">
          <Outliner />
          <Properties />
        </div>
      </div>
      <StatusBar />
    </div>
  );
}
